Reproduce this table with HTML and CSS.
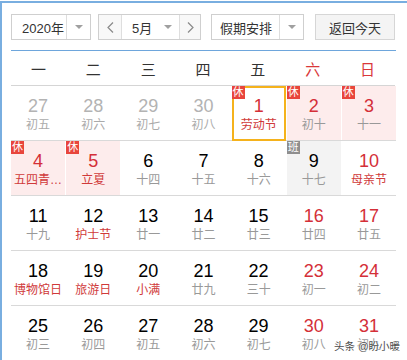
FILE: index.html
```html
<!DOCTYPE html>
<html lang="zh">
<head>
<meta charset="utf-8">
<link rel="stylesheet" href="styles.css">
</head>
<body>
<div class="frame">
  <div class="toolbar">
    <div class="box sel-year">
      <span class="sel-text">2020年</span>
      <span class="sel-arrow"><i class="tri"></i></span>
    </div>
    <div class="box month-group">
      <span class="nav nav-prev"><svg width="7" height="11" viewBox="0 0 7 11"><polyline points="6,0.5 1,5.5 6,10.5" fill="none" stroke="#8a8a8a" stroke-width="1.2"/></svg></span>
      <span class="month"><span class="month-text">5月</span><i class="tri"></i></span>
      <span class="nav nav-next"><svg width="7" height="11" viewBox="0 0 7 11"><polyline points="1,0.5 6,5.5 1,10.5" fill="none" stroke="#8a8a8a" stroke-width="1.2"/></svg></span>
    </div>
    <div class="box sel-holiday">
      <span class="sel-text">假期安排</span>
      <span class="sel-arrow"><i class="tri"></i></span>
    </div>
    <div class="box btn-today">返回今天</div>
  </div>
  <div class="rule"></div>
  <div class="weekdays">
    <span>一</span><span>二</span><span>三</span><span>四</span><span>五</span><span class="we">六</span><span class="we">日</span>
  </div>
  <div class="weeks">
    <div class="week">
      <div class="cell other"><b>27</b><em>初五</em></div>
      <div class="cell other"><b>28</b><em>初六</em></div>
      <div class="cell other"><b>29</b><em>初七</em></div>
      <div class="cell other"><b>30</b><em>初八</em></div>
      <div class="cell sel red fest"><i class="badge">休</i><b>1</b><em>劳动节</em></div>
      <div class="cell rest red"><i class="badge">休</i><b>2</b><em>初十</em></div>
      <div class="cell rest red"><i class="badge">休</i><b>3</b><em>十一</em></div>
    </div>
    <div class="week">
      <div class="cell rest red fest"><i class="badge">休</i><b>4</b><em>五四青…</em></div>
      <div class="cell rest red fest"><i class="badge">休</i><b>5</b><em>立夏</em></div>
      <div class="cell"><b>6</b><em>十四</em></div>
      <div class="cell"><b>7</b><em>十五</em></div>
      <div class="cell"><b>8</b><em>十六</em></div>
      <div class="cell work"><i class="badge gray">班</i><b>9</b><em>十七</em></div>
      <div class="cell red fest"><b>10</b><em>母亲节</em></div>
    </div>
    <div class="week">
      <div class="cell"><b>11</b><em>十九</em></div>
      <div class="cell fest"><b>12</b><em>护士节</em></div>
      <div class="cell"><b>13</b><em>廿一</em></div>
      <div class="cell"><b>14</b><em>廿二</em></div>
      <div class="cell"><b>15</b><em>廿三</em></div>
      <div class="cell red"><b>16</b><em>廿四</em></div>
      <div class="cell red"><b>17</b><em>廿五</em></div>
    </div>
    <div class="week">
      <div class="cell fest"><b>18</b><em>博物馆日</em></div>
      <div class="cell fest"><b>19</b><em>旅游日</em></div>
      <div class="cell fest"><b>20</b><em>小满</em></div>
      <div class="cell"><b>21</b><em>廿九</em></div>
      <div class="cell"><b>22</b><em>三十</em></div>
      <div class="cell red"><b>23</b><em>初一</em></div>
      <div class="cell red"><b>24</b><em>初二</em></div>
    </div>
    <div class="week">
      <div class="cell"><b>25</b><em>初三</em></div>
      <div class="cell"><b>26</b><em>初四</em></div>
      <div class="cell"><b>27</b><em>初五</em></div>
      <div class="cell"><b>28</b><em>初六</em></div>
      <div class="cell"><b>29</b><em>初七</em></div>
      <div class="cell red"><b>30</b><em>初八</em></div>
      <div class="cell red"><b>31</b><em>初九</em></div>
    </div>
  </div>
</div>
<div class="watermark">头条 @盼小暖</div>
</body>
</html>
```
FILE: styles.css
```css
html, body {
  margin: 0;
  padding: 0;
  background: #fff;
}
body {
  font-family: "Liberation Sans", "Noto Sans CJK SC", sans-serif;
  color: #333;
  width: 407px;
  height: 360px;
  overflow: hidden;
  position: relative;
}
.frame {
  margin-top: 1px;
  border-top: 2px solid #79aee0;
  border-left: 2px solid #79aee0;
  padding: 11px 0 0 9px;
  height: 360px;
}
.toolbar {
  display: flex;
  height: 26px;
  width: 385px;
}
.box {
  box-sizing: border-box;
  border: 1px solid #cfcfcf;
  height: 26px;
  display: flex;
  align-items: stretch;
  font-size: 13px;
  color: #333;
  background: #fff;
}
.sel-text {
  flex: 1;
  display: flex;
  align-items: center;
  padding-left: 10px;
}
.sel-arrow {
  width: 23px;
  border-left: 1px solid #dedede;
  display: flex;
  align-items: center;
  justify-content: center;
}
.tri {
  width: 0;
  height: 0;
  border-left: 4px solid transparent;
  border-right: 4px solid transparent;
  border-top: 4px solid #a0a0a0;
}
.sel-year {
  width: 80px;
  margin-right: 7px;
}
.month-group {
  width: 103px;
  margin-right: 10px;
}
.nav {
  width: 22px;
  background: #f8f8f8;
  display: flex;
  align-items: center;
  justify-content: center;
}
.nav-prev {
  border-right: 1px solid #dedede;
}
.nav-next {
  border-left: 1px solid #dedede;
  width: 20px;
}
.month {
  flex: 1;
  display: flex;
  align-items: center;
  padding-left: 10px;
  padding-right: 7px;
}
.month .tri {
  margin-left: auto;
}
.sel-holiday {
  width: 93px;
  margin-right: 11px;
}
.sel-holiday .sel-text {
  padding-left: 8px;
}
.btn-today {
  width: 80px;
  background: #f4f4f4;
  border-color: #d6d6d6;
  justify-content: center;
  align-items: center;
}
.rule {
  margin-top: 10px;
  width: 385px;
  height: 1px;
  background: #6ea6dc;
}
.weekdays {
  display: grid;
  grid-template-columns: repeat(7, 1fr);
  width: 384px;
  height: 33px;
  border-bottom: 1px solid #d5d5d5;
  align-items: center;
  font-size: 15px;
  color: #333;
  text-align: center;
  padding-top: 1px;
  box-sizing: content-box;
}
.weekdays .we {
  color: #d9383a;
}
.weeks {
  width: 385px;
}
.week {
  display: grid;
  grid-template-columns: repeat(7, 1fr);
  column-gap: 1px;
  width: 385px;
  height: 55px;
  box-sizing: border-box;
  border-bottom: 1px solid #d9d9d9;
}
.cell {
  position: relative;
  text-align: center;
  padding-top: 10px;
  overflow: visible;
}
.cell b {
  display: block;
  font-weight: normal;
  font-size: 18px;
  line-height: 20px;
  color: #000;
}
.cell em {
  display: block;
  font-style: normal;
  font-size: 12px;
  line-height: 16px;
  margin-top: 1px;
  color: #999;
  white-space: nowrap;
}
.cell.other b {
  color: #b3b3b3;
}
.cell.other em {
  color: #aaa;
}
.cell.red b {
  color: #d42f38;
}
.cell.fest em {
  color: #d03a3a;
}
.cell.rest {
  background: #fdecec;
}
.cell.work {
  background: #f3f3f3;
}
.cell.sel::after {
  content: "";
  position: absolute;
  left: 0;
  right: 0;
  top: 0;
  bottom: -1px;
  border: 2px solid #f5b21c;
}
.badge {
  position: absolute;
  left: 0;
  top: 0;
  z-index: 2;
  width: 13px;
  height: 13px;
  background: #e8453c;
  color: #fff;
  font-style: normal;
  font-size: 11px;
  line-height: 13px;
  text-align: center;
}
.badge.gray {
  background: #8e8e8e;
}
.watermark {
  position: absolute;
  left: 334px;
  top: 339px;
  font-size: 10.5px;
  line-height: 14px;
  color: #4d4d4d;
  white-space: nowrap;
  text-shadow: 0 0 2px #fff, 0 0 2px #fff, 0 0 1px #fff;
}
```
